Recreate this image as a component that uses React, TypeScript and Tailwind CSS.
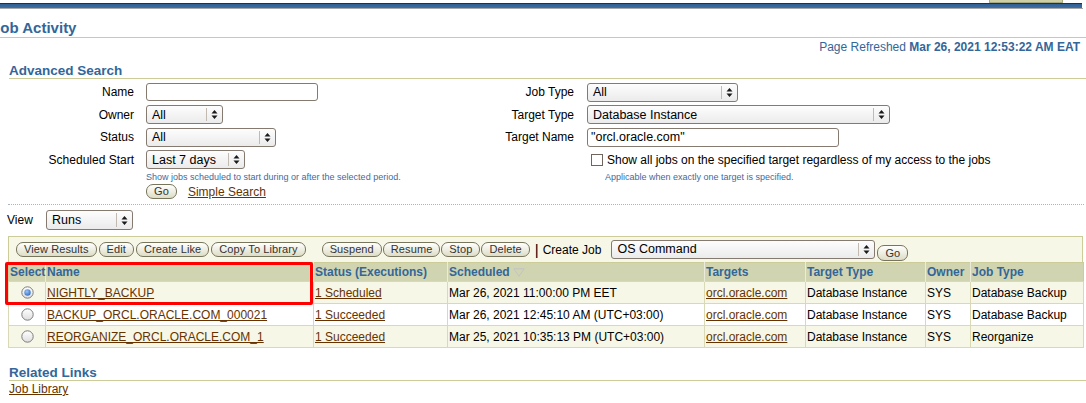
import React from 'react'

const LINK = 'text-[#663300] underline underline-offset-[1px]'

function Arrows() {
  return (
    <svg width="7" height="11" viewBox="0 0 7 11" className="shrink-0">
      <path d="M3.5 1 L6.5 4.5 H0.5 Z M3.5 10 L6.5 6.5 H0.5 Z" fill="#1a1a1a" />
    </svg>
  )
}

// Native-looking select box with the up/down arrow well on the right.
function Select({ value, className }: { value: string; className: string }) {
  return (
    <div
      className={`flex items-stretch rounded-[3px] border border-[#857a6f] bg-linear-to-b from-[#fdfdfd] to-[#ebebeb] text-[12.5px] leading-none text-black ${className}`}
    >
      <span className="flex flex-1 items-center truncate pl-[5px]">{value}</span>
      <span className="my-[2px] flex w-[16px] items-center justify-center border-l border-[#c2bab1]">
        <Arrows />
      </span>
    </div>
  )
}

function Btn({ children, className = '' }: { children: React.ReactNode; className?: string }) {
  return (
    <button
      type="button"
      className={`h-[15px] shrink-0 rounded-[7px] border border-[#77755c] bg-linear-to-b from-white to-[#deddc6] px-[7px] text-[11px] leading-[13px] tracking-[0.1px] text-[#333] ${className}`}
    >
      {children}
    </button>
  )
}

function Radio({ on = false }: { on?: boolean }) {
  return (
    <svg width="13" height="13" viewBox="0 0 13 13" className="inline-block">
      <defs>
        <linearGradient id="rg" x1="0" y1="0" x2="0" y2="1">
          <stop offset="0" stopColor="#ffffff" />
          <stop offset="1" stopColor="#dedede" />
        </linearGradient>
        <radialGradient id="dot" cx="0.4" cy="0.35" r="0.7">
          <stop offset="0" stopColor="#9cc3f2" />
          <stop offset="1" stopColor="#2f6dc8" />
        </radialGradient>
      </defs>
      <circle cx="6.5" cy="6.5" r="5.7" fill="url(#rg)" stroke="#7d7d7d" strokeWidth="1" />
      {on && <circle cx="6.5" cy="6.5" r="3.2" fill="url(#dot)" />}
    </svg>
  )
}

const ROWS = [
  {
    on: true,
    name: 'NIGHTLY_BACKUP',
    status: '1 Scheduled',
    sched: 'Mar 26, 2021 11:00:00 PM EET',
    jobType: 'Database Backup',
    bg: 'bg-[#f7f7e7]',
  },
  {
    on: false,
    name: 'BACKUP_ORCL.ORACLE.COM_000021',
    status: '1 Succeeded',
    sched: 'Mar 26, 2021 12:45:10 AM (UTC+03:00)',
    jobType: 'Database Backup',
    bg: 'bg-white',
  },
  {
    on: false,
    name: 'REORGANIZE_ORCL.ORACLE.COM_1',
    status: '1 Succeeded',
    sched: 'Mar 25, 2021 10:35:13 PM (UTC+03:00)',
    jobType: 'Reorganize',
    bg: 'bg-[#f7f7e7]',
  },
]

export default function App() {
  return (
    <div className="relative h-[403px] w-[1086px] overflow-hidden bg-white font-['Liberation_Sans',Arial,sans-serif] text-[12px] text-black">
      {/* top brand bar */}
      <div className="flex h-[3px] justify-end pr-[23px]">
        <div className="h-[3px] w-[74px] border-x border-b border-[#a9a982] bg-[#cfcfa6]" />
      </div>
      <div className="mr-[4px] h-[1px] bg-[#16325c]" />
      <div className="mr-[4px] h-[4px] bg-linear-to-b from-[#2f5e93] to-[#3f6fa5]" />
      <div className="mr-[3px] h-[1px] bg-[#a8a8a8]" />

      {/* page title (scrolled, so the first letter is clipped as in the page) */}
      <div className="flex h-[29px] items-end overflow-hidden border-b border-[#cccc99]">
        <h1 className="-ml-[8px] text-[15px] leading-[18px] font-bold text-[#336699]">Job Activity</h1>
      </div>

      <div className="mt-[2px] h-[14px] pr-[6px] text-right leading-[14px] text-[#336699]">
        Page Refreshed <span className="font-bold">Mar 26, 2021 12:53:22 AM EAT</span>
      </div>

      <h2 className="mt-[9px] ml-[9px] h-[16px] border-b border-[#cccc99] text-[13.5px] leading-[15px] font-bold text-[#336699]">
        Advanced Search
      </h2>

      {/* search form */}
      <div className="mt-[2px] flex">
        <div className="grid w-[480px] grid-cols-[134px_1fr] grid-rows-[22.5px_22.5px_22.5px_22.5px_13px_15px] gap-x-[12px]">
          <span className="flex items-center justify-end">Name</span>
          <div className="flex items-center">
            <div className="h-[18px] w-[172px] rounded-[3px] border border-[#857a6f] bg-white" />
          </div>
          <span className="flex items-center justify-end">Owner</span>
          <div className="flex items-center">
            <Select value="All" className="h-[19px] w-[77px]" />
          </div>
          <span className="flex items-center justify-end">Status</span>
          <div className="flex items-center">
            <Select value="All" className="h-[19px] w-[130px]" />
          </div>
          <span className="flex items-center justify-end">Scheduled Start</span>
          <div className="flex items-center">
            <Select value="Last 7 days" className="h-[19px] w-[99px]" />
          </div>
          <span />
          <div className="flex items-center text-[9px] text-[#3f6a9c]">
            Show jobs scheduled to start during or after the selected period.
          </div>
          <span />
          <div className="flex items-center gap-[11px]">
            <Btn className="px-[5px]">Go</Btn>
            <span className={LINK}>Simple Search</span>
          </div>
        </div>

        <div className="grid grid-cols-[94px_1fr] grid-rows-[22.5px_22.5px_22.5px_22.5px_13px] gap-x-[13px]">
          <span className="flex items-center justify-end">Job Type</span>
          <div className="flex items-center">
            <Select value="All" className="h-[19px] w-[151px]" />
          </div>
          <span className="flex items-center justify-end">Target Type</span>
          <div className="flex items-center">
            <Select value="Database Instance" className="h-[19px] w-[303px]" />
          </div>
          <span className="flex items-center justify-end">Target Name</span>
          <div className="flex items-center">
            <div className="flex h-[19px] w-[252px] items-center rounded-[3px] border border-[#857a6f] bg-white pl-[3px] text-[12.5px]">
              &quot;orcl.oracle.com&quot;
            </div>
          </div>
          <span />
          <div className="flex items-center gap-[4px] pl-[4px]">
            <span className="h-[12px] w-[12px] border border-[#6f655c] bg-white" />
            <span>Show all jobs on the specified target regardless of my access to the jobs</span>
          </div>
          <span />
          <div className="flex items-center pl-[18px] text-[9px] text-[#3f6a9c]">
            Applicable when exactly one target is specified.
          </div>
        </div>
      </div>

      <div className="mt-[5px] mr-[2px] ml-[8px] border-t border-dotted border-[#a3b5c9]" />

      <div className="mt-[5px] flex h-[20px] items-center">
        <span className="ml-[7px] w-[39px]">View</span>
        <Select value="Runs" className="h-[20px] w-[87px]" />
      </div>

      {/* table toolbar */}
      <div className="mt-[6px] ml-[8px] flex h-[26px] w-[1075px] items-center border-x border-t border-[#cccc99] bg-[#f7f7e7] pl-[7px]">
        <div className="flex gap-[2px]">
          <Btn>View Results</Btn>
          <Btn>Edit</Btn>
          <Btn>Create Like</Btn>
          <Btn>Copy To Library</Btn>
        </div>
        <div className="ml-[16px] flex gap-[1px]">
          <Btn className="px-[6px]">Suspend</Btn>
          <Btn className="px-[6px]">Resume</Btn>
          <Btn className="px-[6px]">Stop</Btn>
          <Btn className="px-[6px]">Delete</Btn>
        </div>
        <span className="ml-[5px] text-[15px] leading-none">|</span>
        <span className="ml-[4px]">Create Job</span>
        <Select value="OS Command" className="ml-[10px] h-[19px] w-[264px]" />
        <Btn className="mb-[1px] ml-[2px] h-[16px] self-end px-[6px]">Go</Btn>
      </div>

      {/* job runs table */}
      <div className="relative ml-[8px] w-[1075px]">
        <table className="w-[1075px] table-fixed border-collapse border border-[#cccc99]">
          <colgroup>
            <col className="w-[37px]" />
            <col className="w-[268px]" />
            <col className="w-[134px]" />
            <col className="w-[257px]" />
            <col className="w-[101px]" />
            <col className="w-[120px]" />
            <col className="w-[45px]" />
            <col className="w-[113px]" />
          </colgroup>
          <thead>
            <tr className="h-[18px] bg-[#d1d4b0] text-left font-bold text-[#336699]">
              <th className="border-r border-[#ebebd9] px-[1px] font-bold">Select</th>
              <th className="border-r border-[#ebebd9] px-[1px] font-bold">Name</th>
              <th className="border-r border-[#ebebd9] px-[1px] font-bold">Status (Executions)</th>
              <th className="border-r border-[#ebebd9] px-[1px] font-bold">
                <span className="inline-flex items-center gap-[3px]">
                  Scheduled
                  <svg width="12" height="9" viewBox="0 0 12 9">
                    <path d="M0.8 0.8 H11.2 L6 8.2 Z" fill="none" stroke="#c4c4c4" strokeWidth="1" />
                  </svg>
                </span>
              </th>
              <th className="border-r border-[#ebebd9] px-[1px] font-bold">Targets</th>
              <th className="border-r border-[#ebebd9] px-[1px] font-bold">Target Type</th>
              <th className="border-r border-[#ebebd9] px-[1px] font-bold">Owner</th>
              <th className="px-[1px] font-bold">Job Type</th>
            </tr>
          </thead>
          <tbody>
            {ROWS.map((r) => (
              <tr key={r.name} className={`h-[22px] ${r.bg}`}>
                <td className="border border-[#d9d9b8] text-center leading-none">
                  <Radio on={r.on} />
                </td>
                <td className="truncate border border-[#d9d9b8] px-[1px]">
                  <span className={LINK}>{r.name}</span>
                </td>
                <td className="truncate border border-[#d9d9b8] px-[1px]">
                  <span className={LINK}>{r.status}</span>
                </td>
                <td className="truncate border border-[#d9d9b8] px-[1px]">{r.sched}</td>
                <td className="truncate border border-[#d9d9b8] px-[1px]">
                  <span className={LINK}>orcl.oracle.com</span>
                </td>
                <td className="truncate border border-[#d9d9b8] px-[1px]">Database Instance</td>
                <td className="border border-[#d9d9b8] px-[1px]">SYS</td>
                <td className="truncate border border-[#d9d9b8] px-[1px]">{r.jobType}</td>
              </tr>
            ))}
          </tbody>
        </table>
        {/* highlight annotation around the selected row */}
        <div className="pointer-events-none absolute top-0 -left-[3px] h-[43px] w-[308px] rounded-[2px] border-[3px] border-[#ff0000]" />
      </div>

      <h2 className="mt-[17px] ml-[9px] h-[16px] border-b border-[#cccc99] text-[13.5px] leading-[15px] font-bold text-[#336699]">
        Related Links
      </h2>
      <div className="mt-[1px] ml-[9px] leading-[14px]">
        <span className={LINK}>Job Library</span>
      </div>
    </div>
  )
}
